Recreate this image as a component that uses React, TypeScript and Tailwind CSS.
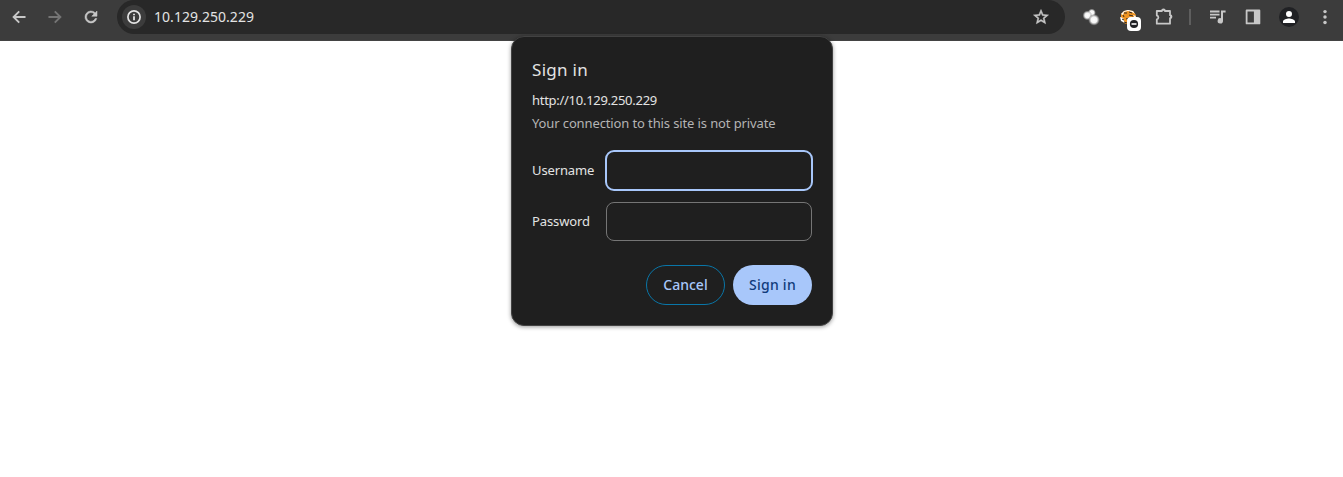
import React from "react";

type IconProps = { children: React.ReactNode; className?: string; box?: string };

function Icon({ children, className = "", box = "0 0 24 24" }: IconProps) {
  return (
    <svg viewBox={box} className={`block shrink-0 ${className}`} fill="currentColor" aria-hidden="true">
      {children}
    </svg>
  );
}

function Toolbar() {
  return (
    <header className="flex h-[41px] items-start border-b border-[#434343] bg-[#3c3c3c] text-[#c7c7c7]">
      <nav className="flex h-[34px] w-[117px] shrink-0 items-center gap-[18px] pl-[10px]">
        <button aria-label="Back">
          <Icon className="size-[18px]">
            <path d="M20.7 10.6H8l5.2-5.2-1.8-1.8L3 12l8.4 8.4 1.8-1.8L8 13.4h12.7z" />
          </Icon>
        </button>
        <button aria-label="Forward" className="text-[#757575]">
          <Icon className="size-[18px]">
            <path d="M3.3 10.6H16l-5.2-5.2 1.8-1.8L21 12l-8.4 8.4-1.8-1.8 5.2-5.2H3.3z" />
          </Icon>
        </button>
        <button aria-label="Reload">
          <Icon className="size-[18px]">
            <path d="M17.65 6.35A8 8 0 1 0 19.73 14h-2.2A5.9 5.9 0 1 1 16.2 7.8L13 11h7V4z" stroke="currentColor" strokeWidth=".7" />
          </Icon>
        </button>
      </nav>
      <div className="flex h-[34px] w-[948px] shrink-0 items-center rounded-full bg-[#282828] pl-[5px] pr-[15px]">
        <span className="flex size-6 items-center justify-center rounded-full bg-[#3c3c3c] text-[#e3e3e3]">
          <Icon className="size-4" box="0 0 16 16">
            <circle cx="8" cy="8" r="6.1" fill="none" stroke="currentColor" strokeWidth="1.7" />
            <path d="M7.1 7.2h1.8v4H7.1zM7.1 4.7h1.8v1.6H7.1z" />
          </Icon>
        </span>
        <span className="ml-2 text-[14px] leading-5 tracking-[0.05px] text-[#e3e3e3]">10.129.250.229</span>
        <Icon className="ml-auto size-[18px]">
          <path d="M22 9.24l-7.19-.62L12 2 9.19 8.63 2 9.24l5.46 4.73L5.82 21 12 17.27 18.18 21l-1.63-7.03zM12 15.4l-3.76 2.27 1-4.28-3.32-2.88 4.38-.38L12 6.1l1.71 4.04 4.38.38-3.32 2.88 1 4.28z" stroke="currentColor" strokeWidth=".7" />
        </Icon>
      </div>
      <div className="flex h-[34px] items-center pl-[17px]">
        <svg viewBox="0 0 18 18" className="block size-[18px]" aria-hidden="true">
          <defs>
            <radialGradient id="orb">
              <stop offset="0" stopColor="#fff" />
              <stop offset=".5" stopColor="#f4f4f4" />
              <stop offset=".7" stopColor="#ccc" stopOpacity=".75" />
              <stop offset="1" stopColor="#888" stopOpacity="0" />
            </radialGradient>
          </defs>
          <circle cx="9.8" cy="4.7" r="4.2" fill="url(#orb)" />
          <circle cx="5.4" cy="7.4" r="5" fill="url(#orb)" />
          <circle cx="12" cy="11.8" r="6" fill="url(#orb)" />
        </svg>
        <svg viewBox="0 0 24 24" className="ml-[19px] mt-[5px] block size-6" aria-hidden="true">
          <path d="M2 6l3-3 4-1 5 1 3 4-1 4-6 6-5-2-3-4z" fill="#ee9321" />
          <path d="M2 6l3-3 4-1 5 1 2 3-3-2-4-1-4 1-1 3zM1 9l3 1 2 5-4-2zM14 7l3 1-1 2z" fill="#fff" />
          <path d="M5 5l3 0M10 4l3 1M4 7l1 2M10 7l4 1M3 11l2 1M5 14l3 1M7 11l3-1" fill="none" stroke="#342a20" strokeWidth="1" />
          <rect x="8" y="9" width="14" height="14" rx="4" fill="#fff" />
          <circle cx="15" cy="16" r="4.1" fill="#202124" />
          <path d="M12.5 15.2h5v1.6h-5z" fill="#fff" />
        </svg>
        <Icon className="ml-[11px] size-5" box="0 0 20 20">
          <path d="M2.8 4h5.1a1.5 1.5 0 0 1 3 0H16v4.2a1.5 1.5 0 0 1 0 3v5.5H2.8v-4.4c2.1-.4 2.1-3.4 0-3.8z" fill="none" stroke="currentColor" strokeWidth="1.8" strokeLinejoin="round" />
          <path d="M8.2 3.5a1.3 1.3 0 0 1 2.6 0zM16 8.5a1.5 1.5 0 0 1 0 2.8z" />
        </Icon>
        <span className="ml-[15px] h-4 w-[2px] bg-[#5e5e5e]" />
        <Icon className="ml-[18px] size-[18px]" box="0 0 18 18">
          <path d="M1 2.6h9.5v1.8H1zM1 5.7h9.5v1.8H1zM1 8.8h6v1.8H1zM12 2.6h4.6v2H14v8.1a2.7 2.7 0 1 1-2-2.5z" />
        </Icon>
        <Icon className="ml-[18px] size-4" box="0 0 16 16">
          <path fillRule="evenodd" d="M1.6.6h12.8c.5 0 .9.4.9.9v12.9c0 .5-.4.9-.9.9H1.6a.9.9 0 0 1-.9-.9V1.5c0-.5.4-.9.9-.9zm.9 1.8v11.2h6.4V2.4z" />
        </Icon>
        <span className="ml-[18px] flex size-5 items-center justify-center rounded-full bg-[#202124] text-white">
          <Icon className="size-[18px]">
            <path d="M12 12a4 4 0 1 0 0-8 4 4 0 0 0 0 8zm0 2c-2.67 0-8 1.34-8 4v2h16v-2c0-2.66-5.33-4-8-4z" />
          </Icon>
        </span>
        <Icon className="ml-[17px] size-[18px]">
          <circle cx="12" cy="4.8" r="2.3" />
          <circle cx="12" cy="12" r="2.3" />
          <circle cx="12" cy="19.2" r="2.3" />
        </Icon>
      </div>
    </header>
  );
}

function SignInDialog() {
  return (
    <form
      role="dialog"
      aria-label="Sign in"
      onSubmit={(e) => e.preventDefault()}
      className="absolute left-[511px] top-[36px] h-[290px] w-[322px] rounded-[13px] border border-[#424242] bg-[#1f1f1f] px-5 pt-[21px] text-[13px] text-[#e3e3e3] shadow-[0_1px_4px_rgba(0,0,0,0.4)]"
    >
      <h1 className="text-[17px] leading-6 tracking-[0.3px]">Sign in</h1>
      <p className="mt-[8px] leading-5 tracking-[-0.28px]">http://10.129.250.229</p>
      <p className="mt-[3px] leading-5 tracking-[-0.12px] text-[#b4b4b4]">Your connection to this site is not private</p>
      <div className="mt-[17px] flex items-center justify-between">
        <label htmlFor="user" className="tracking-[-0.12px]">Username</label>
        <input id="user" className="-mr-px h-[41px] w-52 rounded-[9px] border-2 border-[#a8c7fa] bg-transparent px-3 outline-none" />
      </div>
      <div className="mt-[11px] flex items-center justify-between">
        <label htmlFor="pass" className="tracking-[-0.12px]">Password</label>
        <input id="pass" type="password" className="h-[39px] w-[206px] rounded-lg border border-[#757575] bg-transparent px-3 outline-none" />
      </div>
      <div className="mt-6 flex justify-end gap-2 text-[14px] font-medium">
        <button type="button" className="h-10 w-[79px] rounded-full border border-[#0976a8] pb-0.5 text-[#a8c7fa]">Cancel</button>
        <button type="submit" className="h-10 w-[79px] rounded-full bg-[#a8c7fa] pb-0.5 tracking-[0.25px] text-[#103b7b]">Sign in</button>
      </div>
    </form>
  );
}

export default function App() {
  return (
    <main className="relative h-[477px] w-[1343px] overflow-hidden bg-white font-['Noto_Sans',sans-serif]">
      <Toolbar />
      <SignInDialog />
    </main>
  );
}
